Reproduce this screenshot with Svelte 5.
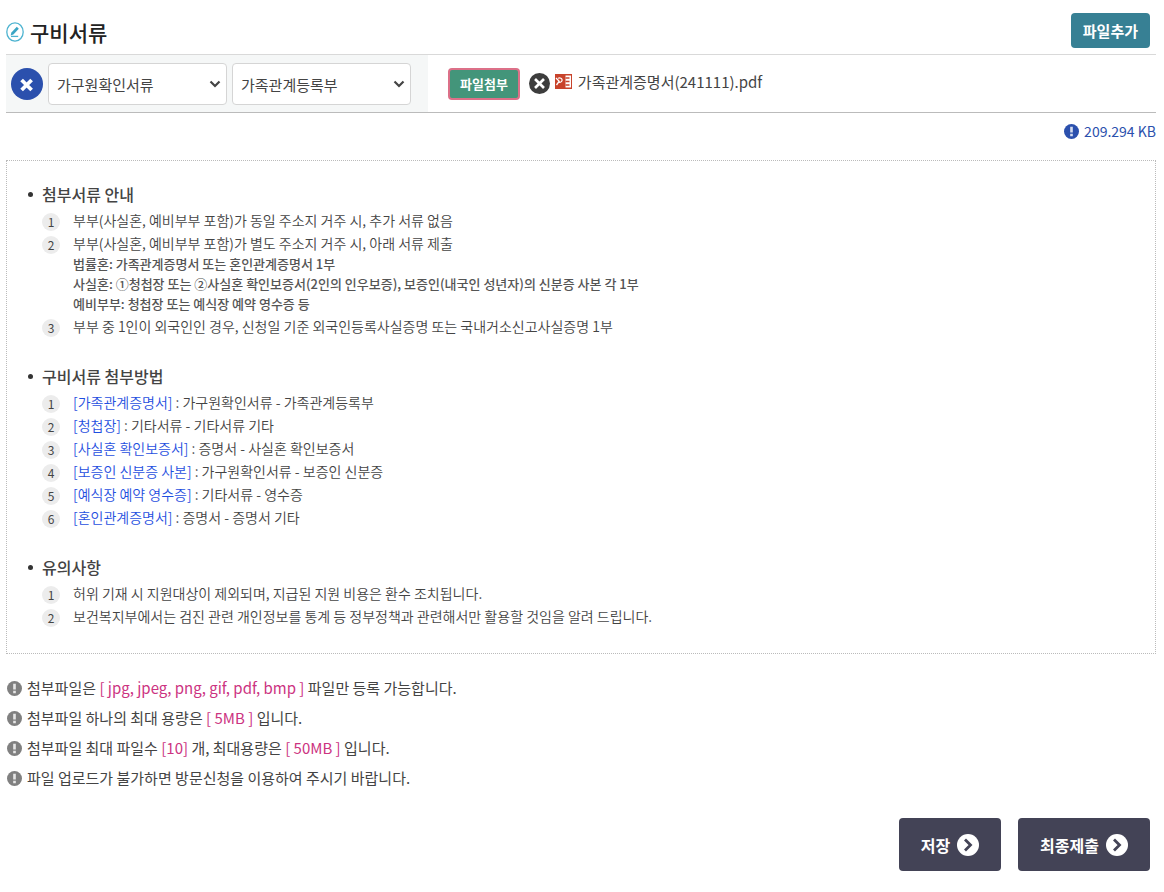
<script>
  const groups = ['가구원확인서류', '증명서', '기타서류'];
  const kinds = ['가족관계등록부', '보증인 신분증', '영수증'];

  let group = $state('가구원확인서류');
  let kind = $state('가족관계등록부');

  const guides = [
    {
      title: '첨부서류 안내',
      items: [
        { text: '부부(사실혼, 예비부부 포함)가 동일 주소지 거주 시, 추가 서류 없음' },
        {
          text: '부부(사실혼, 예비부부 포함)가 별도 주소지 거주 시, 아래 서류 제출',
          details: [
            '법률혼: 가족관계증명서 또는 혼인관계증명서 1부',
            '사실혼: ①청첩장 또는 ②사실혼 확인보증서(2인의 인우보증), 보증인(내국인 성년자)의 신분증 사본 각 1부',
            '예비부부: 청첩장 또는 예식장 예약 영수증 등'
          ]
        },
        { text: '부부 중 1인이 외국인인 경우, 신청일 기준 외국인등록사실증명 또는 국내거소신고사실증명 1부' }
      ]
    },
    {
      title: '구비서류 첨부방법',
      items: [
        { name: '[가족관계증명서]', text: ' : 가구원확인서류 - 가족관계등록부' },
        { name: '[청첩장]', text: ' : 기타서류 - 기타서류 기타' },
        { name: '[사실혼 확인보증서]', text: ' : 증명서 - 사실혼 확인보증서' },
        { name: '[보증인 신분증 사본]', text: ' : 가구원확인서류 - 보증인 신분증' },
        { name: '[예식장 예약 영수증]', text: ' : 기타서류 - 영수증' },
        { name: '[혼인관계증명서]', text: ' : 증명서 - 증명서 기타' }
      ]
    },
    {
      title: '유의사항',
      items: [
        { text: '허위 기재 시 지원대상이 제외되며, 지급된 지원 비용은 환수 조치됩니다.' },
        { text: '보건복지부에서는 검진 관련 개인정보를 통계 등 정부정책과 관련해서만 활용할 것임을 알려 드립니다.' }
      ]
    }
  ];
</script>

{#snippet notice()}
  <svg class="notice" viewBox="0 0 16 16" aria-hidden="true">
    <circle cx="8" cy="8" r="8" fill="currentColor" />
    <path d="M6.6 3h2.8v6H6.6zM6.6 10.4h2.8V13H6.6z" fill="#fff" fill-opacity="0.8" />
  </svg>
{/snippet}

{#snippet arrow()}
  <svg class="arrow" viewBox="0 0 22 22" aria-hidden="true">
    <circle cx="11" cy="11" r="11" fill="#fff" />
    <path d="M8 5.5l5.5 5.5L8 16.5" fill="none" stroke="#434356" stroke-width="2.8" />
  </svg>
{/snippet}

<main>
  <header>
    <h2>
      <svg viewBox="0 0 18 20" aria-hidden="true">
        <ellipse cx="9" cy="10" rx="8.2" ry="9.2" fill="none" stroke="#4db3d0" stroke-width="1.3" />
        <path d="M4.6 13.6l.8-3.2 5.4-5.6 2 1.9-5.4 5.7z" fill="#3aa5c4" />
        <path d="M5 14.4h7.2" stroke="#4db3d0" stroke-width="1.3" />
      </svg>
      구비서류
    </h2>
    <button class="add" type="button">파일추가</button>
  </header>

  <div class="row">
    <div class="kind">
      <button class="remove" type="button" aria-label="행 삭제">
        <svg viewBox="0 0 32 32" aria-hidden="true">
          <circle cx="16" cy="16" r="16" fill="#2b50ad" />
          <path d="M10.6 12l10 10M20.6 12l-10 10" stroke="#fff" stroke-width="3.8" />
        </svg>
      </button>
      <select bind:value={group} aria-label="서류 구분">
        {#each groups as name}
          <option>{name}</option>
        {/each}
      </select>
      <select bind:value={kind} aria-label="서류 종류">
        {#each kinds as name}
          <option>{name}</option>
        {/each}
      </select>
    </div>
    <div class="file">
      <button class="attach" type="button">파일첨부</button>
      <button class="clear" type="button" aria-label="파일 삭제">
        <svg viewBox="0 0 22 22" aria-hidden="true">
          <circle cx="11" cy="11" r="11" fill="#3d3d3d" />
          <path d="M6.3 6.3l9.4 9.4M15.7 6.3l-9.4 9.4" stroke="#fff" stroke-width="2.8" />
        </svg>
      </button>
      <svg class="doc" viewBox="0 0 17 15" aria-hidden="true">
        <path d="M0 0h17v15H0z" fill="#c8432b" />
        <path d="M10.5 1.5H16v12h-5.5z" fill="#fff" />
        <path d="M10.5 4h4M10.5 7.5h4M10.5 11h4" stroke="#c8432b" stroke-width="1.4" />
        <path d="M1 4l3.2 3.2L1.5 11" fill="none" stroke="#fff" stroke-width="1.3" />
        <path d="M3 4.2c5-1.6 5.6 4.4.8 4.2" fill="none" stroke="#fff" stroke-width="1.2" />
      </svg>
      <span>가족관계증명서(241111).pdf</span>
    </div>
  </div>

  <p class="size">{@render notice()}209.294 KB</p>

  <div class="guide">
    {#each guides as guide}
      <section>
        <h3>{guide.title}</h3>
        <ol>
          {#each guide.items as item, i}
            <li>
              <span class="num">{i + 1}</span>
              <div>
                {#if item.name}<span class="name">{item.name}</span>{/if}{item.text}
                {#each item.details ?? [] as detail}
                  <p>{detail}</p>
                {/each}
              </div>
            </li>
          {/each}
        </ol>
      </section>
    {/each}
  </div>

  <ul class="notes">
    <li>{@render notice()}<span>첨부파일은 <em>[ jpg, jpeg, png, gif, pdf, bmp ]</em> 파일만 등록 가능합니다.</span></li>
    <li>{@render notice()}<span>첨부파일 하나의 최대 용량은 <em>[ 5MB ]</em> 입니다.</span></li>
    <li>{@render notice()}<span>첨부파일 최대 파일수 <em>[10]</em> 개, 최대용량은 <em>[ 50MB ]</em> 입니다.</span></li>
    <li>{@render notice()}<span>파일 업로드가 불가하면 방문신청을 이용하여 주시기 바랍니다.</span></li>
  </ul>

  <div class="actions">
    <button type="button">저장{@render arrow()}</button>
    <button type="button">최종제출{@render arrow()}</button>
  </div>
</main>

<style>
  :global(body) {
    margin: 0;
    background: #fff;
  }

  main {
    padding: 0 8px 20px 6px;
    color: #444;
    font-family: 'Noto Sans CJK KR', 'Noto Sans', sans-serif;
    font-size: 15px;
  }

  h2,
  h3,
  p,
  ol,
  ul {
    margin: 0;
    padding: 0;
    list-style: none;
  }

  svg {
    display: block;
    flex: none;
  }

  button {
    padding: 0;
    border: 0;
    background: none;
    font-family: inherit;
    cursor: pointer;
  }

  header {
    display: flex;
    justify-content: space-between;
    align-items: flex-end;
    padding: 13px 6px 6px 0;
    border-bottom: 1px solid #d9d9d9;
  }

  h2 {
    display: flex;
    align-items: center;
    gap: 6px;
    color: #222;
    font-size: 21px;
    font-weight: 500;
    line-height: 32px;
  }

  h2 svg {
    width: 18px;
    height: 20px;
  }

  .add {
    height: 35px;
    padding: 0 12px;
    border-radius: 4px;
    background: #378094;
    color: #fff;
    font-size: 15px;
    font-weight: 700;
  }

  .row {
    display: flex;
    border-bottom: 1px solid #bbb;
  }

  .kind {
    display: flex;
    align-items: center;
    gap: 5px;
    padding: 8px 17px 7px 5px;
    background: #f5f7f7;
  }

  .remove svg {
    width: 32px;
    height: 32px;
  }

  select {
    width: 179px;
    height: 42px;
    padding: 0 24px 0 8px;
    border: 1px solid #d5d5d5;
    border-radius: 4px;
    appearance: none;
    background: #fff
      url("data:image/svg+xml,%3Csvg xmlns='http://www.w3.org/2000/svg' viewBox='0 0 12 8'%3E%3Cpath d='M1.5 1.5L6 6l4.500-4.500' fill='none' stroke='%23444' stroke-width='2.200'/%3E%3C/svg%3E")
      no-repeat right 5px center / 12px 8px;
    color: #444;
    font-family: inherit;
    font-size: 15px;
  }

  .file {
    display: flex;
    align-items: center;
    padding-left: 20px;
  }

  .attach {
    height: 32px;
    margin-right: 9px;
    padding: 0 10px;
    border: 2px solid #dc7088;
    border-radius: 4px;
    background: #43957a;
    color: #fff;
    font-size: 13px;
    font-weight: 700;
  }

  .clear svg {
    width: 21px;
    height: 21px;
  }

  .doc {
    width: 17px;
    height: 15px;
    margin: 0 6px 4px 5px;
  }

  .file span {
    padding-bottom: 4px;
  }

  .notice {
    width: 15px;
    height: 15px;
  }

  .size {
    display: flex;
    justify-content: flex-end;
    align-items: center;
    gap: 5px;
    margin-top: 6px;
    color: #2b50ad;
    font-size: 14px;
    line-height: 24px;
  }

  .guide {
    display: flex;
    flex-direction: column;
    gap: 26px;
    margin-top: 17px;
    padding: 21px 21px 25px;
    border: 1px dotted #bbb;
  }

  h3 {
    display: flex;
    align-items: center;
    gap: 9px;
    font-size: 16px;
    font-weight: 500;
    line-height: 24px;
  }

  h3::before {
    content: '';
    width: 5px;
    height: 5px;
    border-radius: 50%;
    background: #333;
  }

  ol {
    display: flex;
    flex-direction: column;
    gap: 1px;
    margin-top: 3px;
    padding: 0 0 1px 14px;
  }

  ol li {
    display: flex;
    gap: 13px;
    font-size: 14px;
    font-weight: 350;
    line-height: 22px;
  }

  .num {
    flex: none;
    width: 18px;
    height: 18px;
    margin-top: 4px;
    border-radius: 50%;
    background: #ececec;
    font-size: 12px;
    font-weight: 400;
    line-height: 18px;
    text-align: center;
  }

  .name {
    color: #1f4fe0;
  }

  ol p {
    color: #555;
    font-size: 13px;
    font-weight: 500;
    line-height: 20px;
  }

  .notes {
    display: flex;
    flex-direction: column;
    gap: 6px;
    margin-top: 22px;
    line-height: 24px;
  }

  .notes li {
    display: flex;
    align-items: center;
    gap: 5px;
  }

  .notes .notice {
    color: #808080;
    margin-left: 1px;
  }

  em {
    color: #cc3381;
    font-style: normal;
  }

  .actions {
    display: flex;
    justify-content: flex-end;
    gap: 17px;
    margin-top: 28px;
    padding-right: 6px;
  }

  .actions button {
    display: flex;
    align-items: center;
    gap: 7px;
    height: 53px;
    padding: 0 22px;
    border-radius: 4px;
    background: #434356;
    color: #fff;
    font-size: 16px;
    font-weight: 700;
  }

  .arrow {
    width: 22px;
    height: 22px;
  }
</style>
